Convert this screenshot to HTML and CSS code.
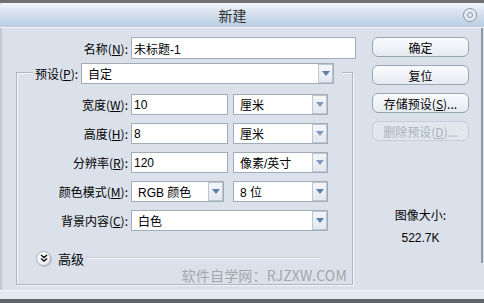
FILE: index.html
```html
<!DOCTYPE html>
<html lang="zh">
<head>
<meta charset="utf-8">
<title>新建</title>
<link rel="stylesheet" href="styles.css">
</head>
<body>
<div class="window">
  <div class="topband"></div>
  <div class="titlebar">
    <span class="title">新建</span>
    <span class="close"><span class="close-in"></span></span>
  </div>
  <div class="body">
    <div class="main">
      <div class="row name-row">
        <span class="label name-label">名称(<u>N</u>):</span>
        <span class="field w-name">未标题-1</span>
      </div>
      <div class="group">
        <div class="legend">
          <span class="label legend-label">预设(<u>P</u>):</span>
          <span class="field select w-preset">自定<span class="drop"><svg width="8" height="5" viewBox="0 0 8 5"><path d="M0 0H8L4 5Z" fill="#5f7fa6"/></svg></span></span>
        </div>
        <div class="rows">
          <div class="row">
            <span class="label">宽度(<u>W</u>):</span>
            <span class="field w-num">10</span>
            <span class="field select w-unit">厘米<span class="drop"><svg width="8" height="5" viewBox="0 0 8 5"><path d="M0 0H8L4 5Z" fill="#7f9bbb"/></svg></span></span>
          </div>
          <div class="row">
            <span class="label">高度(<u>H</u>):</span>
            <span class="field w-num">8</span>
            <span class="field select w-unit">厘米<span class="drop"><svg width="8" height="5" viewBox="0 0 8 5"><path d="M0 0H8L4 5Z" fill="#7f9bbb"/></svg></span></span>
          </div>
          <div class="row">
            <span class="label">分辨率(<u>R</u>):</span>
            <span class="field w-num">120</span>
            <span class="field select w-unit">像素/英寸<span class="drop"><svg width="8" height="5" viewBox="0 0 8 5"><path d="M0 0H8L4 5Z" fill="#7f9bbb"/></svg></span></span>
          </div>
          <div class="row">
            <span class="label">颜色模式(<u>M</u>):</span>
            <span class="field select w-mode">RGB 颜色<span class="drop"><svg width="8" height="5" viewBox="0 0 8 5"><path d="M0 0H8L4 5Z" fill="#5f7fa6"/></svg></span></span>
            <span class="field select w-unit gap9">8 位<span class="drop"><svg width="8" height="5" viewBox="0 0 8 5"><path d="M0 0H8L4 5Z" fill="#5f7fa6"/></svg></span></span>
          </div>
          <div class="row">
            <span class="label">背景内容(<u>C</u>):</span>
            <span class="field select w-bg">白色<span class="drop"><svg width="8" height="5" viewBox="0 0 8 5"><path d="M0 0H8L4 5Z" fill="#5f7fa6"/></svg></span></span>
          </div>
        </div>
        <div class="advanced">
          <span class="adv-icon"><svg width="8" height="8" viewBox="0 0 8 8"><path d="M1 1L4 3.5L7 1M1 4.5L4 7L7 4.5" fill="none" stroke="#111" stroke-width="1.5"/></svg></span>
          <span class="adv-text">高级</span>
          <span class="adv-line"></span>
        </div>
        <div class="watermark">软件自学网：RJZXW.COM</div>
      </div>
    </div>
    <div class="side">
      <div class="side-col">
        <span class="btn">确定</span>
        <span class="btn">复位</span>
        <span class="btn">存储预设(<u>S</u>)...</span>
        <span class="btn disabled">删除预设(<u>D</u>)...</span>
        <div class="size-label">图像大小:</div>
        <div class="size-value">522.7K</div>
      </div>
    </div>
  </div>
  <div class="bottom"></div>
</div>
</body>
</html>
```

FILE: styles.css
```css
* { box-sizing: border-box; }
html, body { margin: 0; padding: 0; }
body {
  width: 484px;
  height: 303px;
  overflow: hidden;
  background: #dbe1ea;
  font-family: "Liberation Sans", "Noto Sans CJK SC", sans-serif;
  font-size: 12px;
  color: #000;
}
u { text-decoration: underline; text-underline-offset: 1px; }

.window { height: 303px; display: flex; flex-direction: column; }
.topband { height: 3px; background: #707070; }

.titlebar {
  height: 25px;
  display: flex;
  align-items: center;
  background: linear-gradient(#f4f7fb 0%, #d9e4f0 35%, #b9cde2 100%);
  border-bottom: 1px solid #eef2f7;
  border-radius: 3px 3px 0 0;
}
.title {
  flex: 1;
  text-align: center;
  font-family: "Noto Sans CJK SC", sans-serif;
  font-size: 14px;
  color: #2e2e2e;
  padding-left: 2px;
}
.close {
  width: 14px;
  height: 14px;
  margin-right: 7px;
  border-radius: 50%;
  border: 1px solid #8c97a5;
  display: flex;
  align-items: center;
  justify-content: center;
  background: #e4ebf3;
}
.close-in {
  width: 6px;
  height: 6px;
  border-radius: 50%;
  border: 1px solid #8c97a5;
}

.body {
  flex: 1;
  display: flex;
  box-shadow: inset 2px 0 #c3cad3;
}

.main { width: 360px; padding-top: 9px; }

.row { display: flex; align-items: center; height: 21px; }
.label {
  font-family: "Noto Sans CJK SC", sans-serif;
  font-size: 12px;
  text-align: right;
  white-space: nowrap;
}
.name-row { height: 22px; }
.name-label { width: 128px; margin-right: 3px; }

.field {
  height: 21px;
  background: #fff;
  border: 1px solid #a2acb8;
  display: flex;
  align-items: center;
  padding-left: 2px;
  font-family: "Liberation Sans", "Noto Sans CJK SC", sans-serif;
  font-size: 12px;
  white-space: nowrap;
}
.name-row .field { height: 22px; }
.select { padding-left: 6px; position: relative; }
.drop {
  margin-left: auto;
  margin-right: 0;
  width: 15px;
  height: 19px;
  border: 1px solid #bdc6d1;
  background: linear-gradient(#f3f6f9, #e3e9f0);
  display: flex;
  align-items: center;
  justify-content: center;
}

.w-name { width: 225px; }

.group {
  margin-top: 13px;
  margin-left: 16px;
  width: 337px;
  height: 213px;
  border: 1px solid #adb6c2;
  box-shadow: inset 1px 1px #f4f7fa, 1px 1px #f4f7fa;
}
.legend {
  margin-top: -10px;
  margin-left: 16px;
  width: 309px;
  background: #dbe1ea;
  display: flex;
  align-items: center;
  height: 21px;
  padding-left: 2px;
}
.legend-label { margin-right: 3px; }
.w-preset { width: 253px; }

.rows {
  margin-top: 10px;
  display: flex;
  flex-direction: column;
  gap: 8px;
}
.rows .label { width: 111px; margin-right: 3px; }
.w-num { width: 97px; margin-right: 5px; }
.w-unit { width: 95px; }
.w-mode { width: 93px; }
.gap9 { margin-left: 9px; }
.w-bg { width: 197px; }

.advanced {
  margin-top: 20px;
  height: 14px;
  display: flex;
  align-items: center;
}
.adv-icon {
  margin-left: 19px;
  width: 15px;
  height: 15px;
  border-radius: 50%;
  border: 1px solid #a9b1bc;
  background: radial-gradient(circle at 40% 35%, #ffffff, #e3e7ec);
  box-shadow: 1px 1px 1px #b7bec8;
  display: flex;
  align-items: center;
  justify-content: center;
}
.adv-text {
  margin-left: 7px;
  font-family: "Noto Sans CJK SC", sans-serif;
  font-size: 13px;
}
.adv-line {
  flex: 1;
  margin-left: 2px;
  margin-right: 32px;
  height: 2px;
  border-top: 1px solid #c6cdd6;
  border-bottom: 1px solid #f6f8fa;
}

.watermark {
  margin-top: 3px;
  margin-right: 5px;
  text-align: right;
  font-family: "Noto Sans CJK SC", sans-serif;
  font-size: 14px;
  line-height: 14px;
  color: #a2a7ae;
  letter-spacing: 0.2px;
}

.side {
  width: 123px;
  height: 235px;
  border-right: 2px solid #8f99a6;
  padding-top: 9px;
}
.side-col {
  margin-left: 12px;
  width: 97px;
  display: flex;
  flex-direction: column;
  align-items: center;
  gap: 8px;
}
.btn {
  width: 97px;
  height: 20px;
  border: 1px solid #9aa5b3;
  border-radius: 6px;
  background: linear-gradient(#fafbfd, #e6ebf1);
  display: flex;
  align-items: center;
  justify-content: center;
  font-family: "Noto Sans CJK SC", sans-serif;
  font-size: 12px;
  white-space: nowrap;
}
.btn.disabled {
  color: #a9b1bd;
  border-color: #c6cdd7;
  background: #e2e7ee;
}
.size-label {
  margin-top: 59px;
  font-family: "Noto Sans CJK SC", sans-serif;
  font-size: 12px;
  line-height: 14px;
}
.size-value {
  margin-top: 1px;
  font-family: "Liberation Sans", sans-serif;
  font-size: 12px;
  line-height: 14px;
}

.bottom {
  height: 13px;
  border-top: 1px solid #f2f5f9;
  background: linear-gradient(#e3e9f1 0%, #e3e9f1 70%, #5f636a 70%);
}
```
